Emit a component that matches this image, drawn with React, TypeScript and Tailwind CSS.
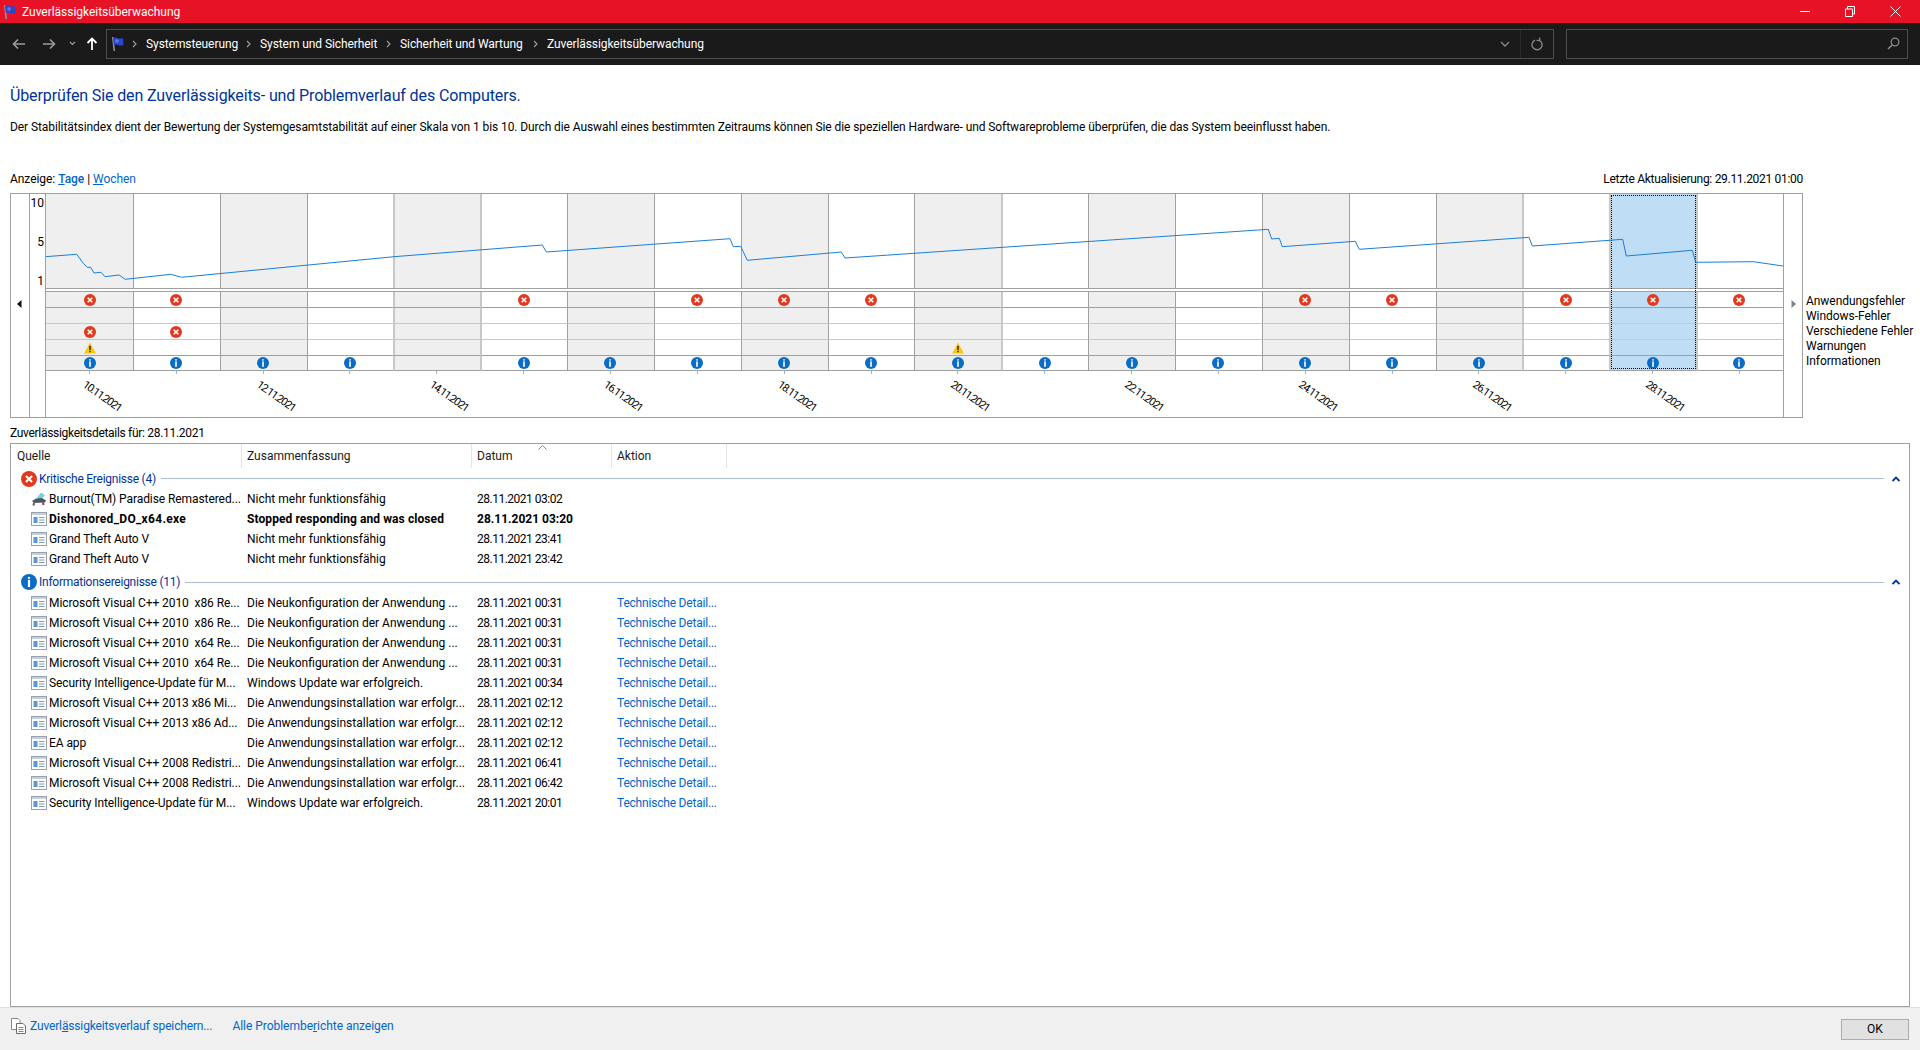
import React from 'react';

const FONT = "font-['Roboto','Liberation_Sans',sans-serif]";

const ERRORS = [0, 1, 5, 7, 8, 9, 14, 15, 17, 18, 19];
const MISC_ERRORS = [0, 1];
const WARNINGS = [0, 10];
const NO_INFO = [4];
const SELECTED = 18;
const SOFT_BORDERS = [4, 5, 11, 17, 18, 19];
const DATES: Record<number, string> = {
  0: '10.11.2021', 2: '12.11.2021', 4: '14.11.2021', 6: '16.11.2021', 8: '18.11.2021',
  10: '20.11.2021', 12: '22.11.2021', 14: '24.11.2021', 16: '26.11.2021', 18: '28.11.2021',
};

// stability index, in full page coordinates minus the plot origin (46,194)
const LINE = [
  [45.3, 256.7], [76.7, 254.3], [83.3, 263.3], [87.3, 267.3], [90.7, 267.3], [94, 273], [101, 272.3], [105, 276.7],
  [119, 275], [125.3, 279.3], [170.7, 274.3], [181.7, 277.3], [394, 256.7], [542.3, 245], [546.3, 252], [730, 238.7],
  [733.3, 246.7], [740.7, 246.3], [747.3, 260.3], [841.3, 252], [845, 258], [1268.3, 229.3], [1271.7, 239],
  [1279.3, 238.3], [1282.3, 246.7], [1355.3, 241.3], [1359.3, 249.3], [1529, 237.3], [1532.3, 246], [1622.7, 239.3],
  [1626.3, 256], [1692.3, 250.3], [1695.7, 262.3], [1753.3, 261.7], [1783, 266],
].map(([x, y]) => `${x - 46},${y - 194}`).join(' ');

const LEGEND = ['Anwendungsfehler', 'Windows-Fehler', 'Verschiedene Fehler', 'Warnungen', 'Informationen'];

const CRITICAL = [
  { source: 'Burnout(TM) Paradise Remastered...', summary: 'Nicht mehr funktionsfähig', date: '28.11.2021 03:02', game: true },
  { source: 'Dishonored_DO_x64.exe', summary: 'Stopped responding and was closed', date: '28.11.2021 03:20', bold: true },
  { source: 'Grand Theft Auto V', summary: 'Nicht mehr funktionsfähig', date: '28.11.2021 23:41' },
  { source: 'Grand Theft Auto V', summary: 'Nicht mehr funktionsfähig', date: '28.11.2021 23:42' },
];

const RECONFIG = 'Die Neukonfiguration der Anwendung ...';
const INSTALLED = 'Die Anwendungsinstallation war erfolgr...';
const UPDATED = 'Windows Update war erfolgreich.';

const INFO = [
  { source: 'Microsoft Visual C++ 2010  x86 Re...', summary: RECONFIG, date: '28.11.2021 00:31' },
  { source: 'Microsoft Visual C++ 2010  x86 Re...', summary: RECONFIG, date: '28.11.2021 00:31' },
  { source: 'Microsoft Visual C++ 2010  x64 Re...', summary: RECONFIG, date: '28.11.2021 00:31' },
  { source: 'Microsoft Visual C++ 2010  x64 Re...', summary: RECONFIG, date: '28.11.2021 00:31' },
  { source: 'Security Intelligence-Update für M...', summary: UPDATED, date: '28.11.2021 00:34' },
  { source: 'Microsoft Visual C++ 2013 x86 Mi...', summary: INSTALLED, date: '28.11.2021 02:12' },
  { source: 'Microsoft Visual C++ 2013 x86 Ad...', summary: INSTALLED, date: '28.11.2021 02:12' },
  { source: 'EA app', summary: INSTALLED, date: '28.11.2021 02:12' },
  { source: 'Microsoft Visual C++ 2008 Redistri...', summary: INSTALLED, date: '28.11.2021 06:41' },
  { source: 'Microsoft Visual C++ 2008 Redistri...', summary: INSTALLED, date: '28.11.2021 06:42' },
  { source: 'Security Intelligence-Update für M...', summary: UPDATED, date: '28.11.2021 20:01' },
];

const Flag: React.FC = () => (
  <svg width="14" height="16" viewBox="0 0 14 16" className="shrink-0">
    <path d="M2 1 L3.4 1 L5 15 L3.6 15 Z" fill="#9a9ab0" />
    <path d="M3 2 C6 0 8 4 13 2 L13.5 9 C9 11 7 7 3.8 9 Z" fill="#2b46c8" />
    <path d="M6 3 L9 4 L8 7 L5 6 Z" fill="#5f7ae8" />
  </svg>
);

const ErrorIcon: React.FC<{ size?: number }> = ({ size = 12 }) => (
  <svg width={size} height={size} viewBox="0 0 12 12" className="block">
    <circle cx="6" cy="6" r="6" fill="#e2391d" />
    <path d="M3.7 3.7 L8.3 8.3 M8.3 3.7 L3.7 8.3" stroke="#fff" strokeWidth="1.6" />
  </svg>
);

const InfoIcon: React.FC<{ size?: number }> = ({ size = 12 }) => (
  <svg width={size} height={size} viewBox="0 0 12 12" className="block">
    <circle cx="6" cy="6" r="6" fill="#0a6cc4" />
    <rect x="5.2" y="2.2" width="1.6" height="1.4" fill="#fff" />
    <rect x="5.2" y="4.4" width="1.6" height="5.4" fill="#fff" />
  </svg>
);

const WarningIcon: React.FC = () => (
  <svg width="12" height="12" viewBox="0 0 12 12" className="block">
    <path d="M6 0.5 L12 11.5 L0 11.5 Z" fill="#fcc80f" />
    <rect x="5.3" y="3.8" width="1.4" height="4.2" fill="#1a1a1a" />
    <rect x="5.3" y="8.8" width="1.4" height="1.4" fill="#1a1a1a" />
  </svg>
);

const AppIcon: React.FC = () => (
  <svg width="16" height="16" viewBox="0 0 16 16" className="shrink-0">
    <rect x="0.5" y="1.5" width="15" height="13" fill="#fff" stroke="#98a2ae" />
    <rect x="1" y="2" width="14" height="2" fill="#c4d0de" />
    <rect x="2.5" y="6" width="4" height="6" fill="#5a97d8" />
    <path d="M8 6.5 H13.5 M8 9 H13.5 M8 11.5 H13.5" stroke="#7f98b4" />
  </svg>
);

const GameIcon: React.FC = () => (
  <svg width="16" height="16" viewBox="0 0 16 16" className="shrink-0">
    <path d="M6 7 L10 1.5 L14 4.5 L10 8 Z" fill="#74cfe2" />
    <path d="M1 10 L5 7.5 L11 7 L15 9.5 L14 11.5 L3 12 Z" fill="#4a5660" />
    <path d="M3 12 L2.5 14.5 M12 11.5 L12.5 14" stroke="#9a3a2c" strokeWidth="2" />
  </svg>
);

const NavChevron: React.FC = () => (
  <svg width="5" height="8" viewBox="0 0 5 8" className="shrink-0">
    <path d="M1 1 L4 4 L1 7" fill="none" stroke="#9a9a9a" strokeWidth="1.2" />
  </svg>
);

const TitleBar: React.FC = () => (
  <div className="flex h-[23px] items-center bg-[#e81226] text-white">
    <div className="ml-[2px]">
      <Flag />
    </div>
    <span className="ml-[6px] text-[12px] tracking-[-0.03px]">Zuverlässigkeitsüberwachung</span>
    <div className="ml-auto flex items-center">
      <div className="mr-[35px] h-px w-[10px] bg-white" />
      <svg width="10" height="11" viewBox="0 0 10 11" className="mr-[35px]">
        <path d="M0.5 3 H7.5 V10.5 H0.5 Z M2.5 3 V0.5 H9.5 V8 H7.5" fill="none" stroke="#fff" />
      </svg>
      <svg width="11" height="11" viewBox="0 0 11 11" className="mr-[19px]">
        <path d="M0.5 0.5 L10.5 10.5 M10.5 0.5 L0.5 10.5" stroke="#fff" />
      </svg>
    </div>
  </div>
);

const Crumb: React.FC<{ label: string; width: string }> = ({ label, width }) => (
  <div className={`flex items-center ${width}`}>
    <span className="text-[12px] tracking-[-0.08px] text-white">{label}</span>
  </div>
);

const Toolbar: React.FC = () => (
  <div className="flex h-[42px] items-center bg-[#1a1a1a] pb-[1px]">
    <div className="flex w-[106px] items-center pl-[12px]">
      <svg width="14" height="12" viewBox="0 0 14 12">
        <path d="M13 6 H2 M6 1.5 L1.5 6 L6 10.5" fill="none" stroke="#9c9c9c" strokeWidth="1.6" />
      </svg>
      <svg width="14" height="12" viewBox="0 0 14 12" className="ml-[16px]">
        <path d="M1 6 H12 M8 1.5 L12.5 6 L8 10.5" fill="none" stroke="#9c9c9c" strokeWidth="1.6" />
      </svg>
      <svg width="7" height="5" viewBox="0 0 7 5" className="ml-[13px]">
        <path d="M1 1 L3.5 3.5 L6 1" fill="none" stroke="#9c9c9c" strokeWidth="1.2" />
      </svg>
      <svg width="12" height="14" viewBox="0 0 12 14" className="ml-[10px]">
        <path d="M6 13 V2 M1.5 6 L6 1.5 L10.5 6" fill="none" stroke="#fff" strokeWidth="1.8" />
      </svg>
    </div>
    <div className="flex h-[30px] w-[1448px] items-center border border-[#4d4d4d]">
      <div className="ml-[3px]">
        <Flag />
      </div>
      <div className="ml-[8px] mr-[9px]"><NavChevron /></div>
      <Crumb label="Systemsteuerung" width="w-[100px]" />
      <div className="mr-[9px]"><NavChevron /></div>
      <Crumb label="System und Sicherheit" width="w-[126px]" />
      <div className="mr-[9px]"><NavChevron /></div>
      <Crumb label="Sicherheit und Wartung" width="w-[133px]" />
      <div className="mr-[9px]"><NavChevron /></div>
      <Crumb label="Zuverlässigkeitsüberwachung" width="w-[160px]" />
      <div className="ml-auto flex h-full items-center">
        <svg width="10" height="6" viewBox="0 0 10 6" className="mr-[10px]">
          <path d="M1 1 L5 5 L9 1" fill="none" stroke="#8a8a8a" strokeWidth="1.3" />
        </svg>
        <div className="h-full w-px bg-[#2a2a2a]" />
        <svg width="12" height="14" viewBox="0 0 12 14" className="mx-[10px]">
          <path d="M4 3.2 A5 5 0 1 0 8.5 3.4 M8.8 0.6 L8.5 3.6 L5.6 3.4" fill="none" stroke="#8a8a8a" strokeWidth="1.3" />
        </svg>
      </div>
    </div>
    <div className="ml-[12px] flex h-[30px] w-[342px] items-center justify-end border border-[#4d4d4d] pr-[7px]">
      <svg width="13" height="13" viewBox="0 0 13 13">
        <circle cx="8" cy="5" r="3.8" fill="none" stroke="#8a8a8a" strokeWidth="1.3" />
        <path d="M5.2 8 L1 12" stroke="#8a8a8a" strokeWidth="1.6" />
      </svg>
    </div>
  </div>
);

const ChartColumn: React.FC<{ index: number }> = ({ index }) => {
  const selected = index === SELECTED;
  const shaded = index % 2 === 0;
  const fill = selected ? 'bg-[#bfddf5]' : shaded ? 'bg-[#efefef]' : 'bg-white';
  const soft = SOFT_BORDERS.includes(index);
  const left = index === 0 ? '' : soft ? 'border-l-2 border-l-[#c8c8c8]' : 'border-l border-l-[#a0a0a0]';
  const nudge = index === 0 ? 'pl-[1px]' : soft ? 'pr-[2px]' : 'pr-[1px]';
  const cells = [
    ERRORS.includes(index) ? <ErrorIcon /> : null,
    null,
    MISC_ERRORS.includes(index) ? <ErrorIcon /> : null,
    WARNINGS.includes(index) ? <WarningIcon /> : null,
    NO_INFO.includes(index) ? null : <InfoIcon />,
  ];
  return (
    <div className="relative flex min-w-0 flex-1 flex-col">
      <div className={`h-[94px] ${fill} ${left}`} />
      <div className="h-[4px] border-y border-[#a0a0a0]" />
      {cells.map((icon, row) => (
        <div
          key={row}
          className={`flex ${row === 4 ? 'h-[15px]' : 'h-[16px]'} items-center justify-center border-b ${row === 1 || row === 2 ? 'border-b-[#c8c8c8]' : 'border-b-[#a0a0a0]'} ${fill} ${left} ${nudge}`}
        >
          {icon}
        </div>
      ))}
      <div className="relative flex-1">
        <div className="mx-auto h-[3px] w-px bg-[#b0b0b0]" />
        {DATES[index] && (
          <span className="absolute left-[38px] top-[7px] origin-left rotate-[35deg] whitespace-nowrap text-[11px] leading-none tracking-[-1.1px] text-black">
            {DATES[index]}
          </span>
        )}
      </div>
      {selected && (
        <div className="absolute bottom-[48px] left-[2px] right-0 top-[1px] border border-dotted border-black" />
      )}
    </div>
  );
};

const Chart: React.FC = () => (
  <div className="flex items-start">
    <div className="flex h-[225px] w-[1793px] border border-[#a0a0a0]">
      <div className="flex w-[19px] justify-center border-r border-r-[#a0a0a0] pr-[2px] pt-[106px]">
        <svg width="5" height="8" viewBox="0 0 5 8">
          <path d="M4.5 0 V8 L0 4 Z" fill="#111" />
        </svg>
      </div>
      <div className="flex w-[16px] flex-col items-end gap-[23px] border-r border-r-[#a0a0a0] pr-[1px] pt-[1px] text-[12px] leading-[16px]">
        <span>10</span>
        <span>5</span>
        <span>1</span>
      </div>
      <div className="relative flex w-[1737px]">
        {Array.from({ length: 20 }, (_, i) => (
          <ChartColumn key={i} index={i} />
        ))}
        <svg width="1737" height="94" viewBox="0 0 1737 94" className="absolute left-0 top-0">
          <polyline points={LINE} fill="none" stroke="#1a7fd6" strokeWidth="1" />
        </svg>
      </div>
      <div className="flex w-[19px] justify-center border-l border-l-[#a0a0a0] pt-[106px]">
        <svg width="5" height="8" viewBox="0 0 5 8">
          <path d="M0.5 0 V8 L5 4 Z" fill="#808080" />
        </svg>
      </div>
    </div>
    <div className="ml-[3px] mt-[101px] flex flex-col whitespace-nowrap text-[12px] leading-[15px] tracking-[-0.05px]">
      {LEGEND.map((label) => (
        <span key={label}>{label}</span>
      ))}
    </div>
  </div>
);

const EventRow: React.FC<{
  source: string;
  summary: string;
  date: string;
  bold?: boolean;
  game?: boolean;
  action?: boolean;
}> = ({ source, summary, date, bold, game, action }) => (
  <div className={`flex h-[20px] items-center text-[12px] ${bold ? 'font-bold' : ''}`}>
    <div className="flex w-[231px] items-center pl-[20px]">
      {game ? <GameIcon /> : <AppIcon />}
      <span className={`ml-[2px] whitespace-pre ${bold ? 'tracking-[0.3px]' : 'tracking-[-0.08px]'}`}>{source}</span>
    </div>
    <div className={`w-[230px] whitespace-nowrap pl-[5px] ${bold ? 'tracking-[0.08px]' : ''}`}>{summary}</div>
    <div className={`w-[140px] pl-[5px] ${bold ? '' : 'tracking-[-0.5px]'}`}>{date}</div>
    <div className="w-[115px] pl-[5px]">
      {action && <span className="tracking-[-0.2px] text-[#0066cc]">Technische Detail...</span>}
    </div>
  </div>
);

const GroupHeader: React.FC<{ label: string; icon: React.ReactNode; height: string }> = ({ label, icon, height }) => (
  <div className={`flex items-center pl-[10px] ${height}`}>
    <div className="w-[16px]">{icon}</div>
    <span className="ml-[2px] whitespace-nowrap text-[12px] tracking-[-0.25px] text-[#003399]">{label}</span>
    <div className="ml-[5px] h-px flex-1 bg-[#aabcd8]" />
    <svg width="8" height="6" viewBox="0 0 8 6" className="ml-[8px] mr-[9px]">
      <path d="M0.5 5 L4 1.5 L7.5 5" fill="none" stroke="#003399" strokeWidth="1.8" />
    </svg>
  </div>
);

const Details: React.FC = () => (
  <div className="flex min-h-0 flex-1 flex-col border-x border-b border-t border-[#a0a0a0]">
    <div className="relative flex h-[24px] items-center text-[12px] text-[#1a1a1a]">
      <div className="flex h-full w-[231px] items-center border-r border-r-[#e5e5e5] pl-[6px]">Quelle</div>
      <div className="flex h-full w-[230px] items-center border-r border-r-[#e5e5e5] pl-[5px]">Zusammenfassung</div>
      <div className="flex h-full w-[140px] items-center border-r border-r-[#e5e5e5] pl-[5px]">Datum</div>
      <div className="flex h-full w-[115px] items-center border-r border-r-[#e5e5e5] pl-[5px]">Aktion</div>
      <svg width="9" height="5" viewBox="0 0 9 5" className="absolute left-[527px] top-[1px]">
        <path d="M0.5 4.5 L4.5 0.5 L8.5 4.5" fill="none" stroke="#8a8a8a" />
      </svg>
    </div>
    <GroupHeader label="Kritische Ereignisse (4)" icon={<ErrorIcon size={16} />} height="h-[21px]" />
    {CRITICAL.map((row, i) => (
      <EventRow key={i} {...row} />
    ))}
    <GroupHeader label="Informationsereignisse (11)" icon={<InfoIcon size={16} />} height="h-[24px] pt-[2px]" />
    {INFO.map((row, i) => (
      <EventRow key={i} {...row} action />
    ))}
  </div>
);

const Footer: React.FC = () => (
  <div className="flex h-[43px] items-center border-t border-t-[#e0e0e0] bg-[#f0f0f0] pb-[6px] pl-[11px] pr-[11px] text-[12px] text-[#0066cc]">
    <svg width="15" height="16" viewBox="0 0 15 16" className="shrink-0">
      <path d="M0.5 0.5 H7 L9 2.5 V11.5 H0.5 Z" fill="#fff" stroke="#8a8a8a" />
      <path d="M5.5 5.5 H12 L14.5 8 V15.5 H5.5 Z" fill="#fff" stroke="#6d6d6d" />
      <path d="M7.5 9.5 H12.5 M7.5 11.5 H12.5 M7.5 13.5 H12.5" stroke="#5a8fc8" />
    </svg>
    <span className="ml-[4px] tracking-[-0.15px]">
      Zuverl<u>ä</u>ssigkeitsverlauf speichern...
    </span>
    <span className="ml-[20px] tracking-[-0.03px]">
      Alle Problembe<u>r</u>ichte anzeigen
    </span>
    <div className="ml-auto mt-[6px] flex h-[21px] w-[68px] items-center justify-center border border-[#adadad] bg-[#e1e1e1] text-black">
      OK
    </div>
  </div>
);

const App: React.FC = () => (
  <div className={`flex h-[1050px] w-[1920px] flex-col overflow-hidden bg-white text-black ${FONT}`}>
    <TitleBar />
    <Toolbar />
    <div className="flex min-h-0 flex-1 flex-col pl-[10px] pr-[10px]">
      <h1 className="mt-[20px] h-[22px] text-[16px] leading-[22px] tracking-[-0.12px] text-[#003399]">
        Überprüfen Sie den Zuverlässigkeits- und Problemverlauf des Computers.
      </h1>
      <p className="mt-[12px] h-[16px] text-[12px] leading-[16px] tracking-[-0.085px]">
        Der Stabilitätsindex dient der Bewertung der Systemgesamtstabilität auf einer Skala von 1 bis 10. Durch die Auswahl eines bestimmten Zeitraums können Sie die speziellen Hardware- und Softwareprobleme überprüfen, die das System beeinflusst haben.
      </p>
      <div className="mt-[36px] flex h-[16px] w-[1793px] items-center justify-between text-[12px] leading-[16px]">
        <span className="tracking-[-0.05px]">
          Anzeige:{' '}
          <span className="font-medium text-[#0066cc]"><u>T</u>age</span> |{' '}
          <span className="text-[#0066cc]"><u>W</u>ochen</span>
        </span>
        <span className="tracking-[-0.3px]">Letzte Aktualisierung: 29.11.2021 01:00</span>
      </div>
      <div className="mt-[6px]">
        <Chart />
      </div>
      <div className="mt-[7px] h-[16px] text-[12px] leading-[16px] tracking-[-0.3px]">Zuverlässigkeitsdetails für: 28.11.2021</div>
      <div className="mt-[2px] flex min-h-0 flex-1 flex-col">
        <Details />
      </div>
    </div>
    <Footer />
  </div>
);

export default App;
